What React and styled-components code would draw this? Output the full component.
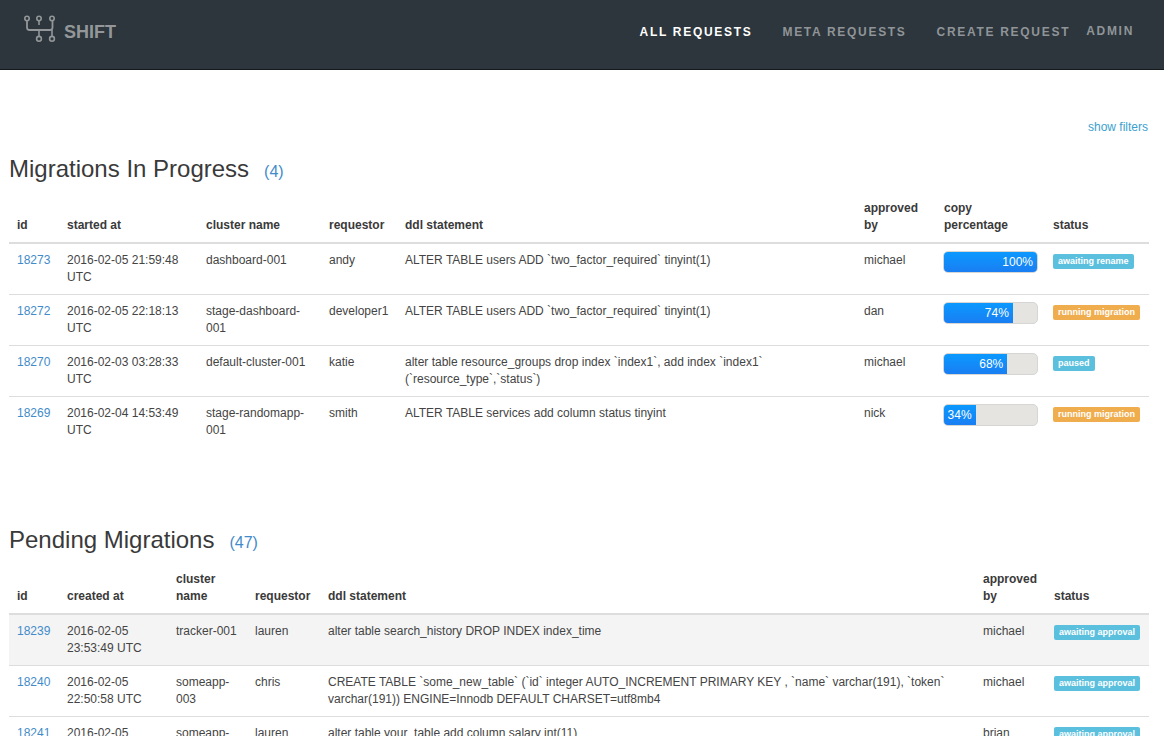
import React from 'react'
import styled, { createGlobalStyle } from 'styled-components'

const GlobalStyle = createGlobalStyle`
  html, body {
    margin: 0;
    height: 736px;
    overflow: hidden;
    background: #fff;
  }
  body {
    font-family: "Liberation Sans", Arial, sans-serif;
    font-size: 12px;
    line-height: 17px;
    color: #444;
  }
`

const Navbar = styled.header`
  display: flex;
  align-items: center;
  box-sizing: border-box;
  height: 70px;
  padding: 0 30px 5px 24px;
  background: #2c363c;
  border-bottom: 1px solid #14191c;
`

const Brand = styled.div`
  display: flex;
  align-items: center;
  gap: 6px;
  margin-right: auto;
  color: #93979a;
  font-size: 18px;
  font-weight: bold;
`

const LogoMark = styled.svg`
  margin-bottom: 4px;
`

const NavLink = styled.a`
  margin-left: ${(p) => p.$gap}px;
  margin-bottom: ${(p) => (p.$raised ? 2 : 0)}px;
  color: ${(p) => (p.$active ? '#fff' : '#909498')};
  font-size: 12px;
  font-weight: bold;
  letter-spacing: 1.7px;
  white-space: nowrap;
`

const Content = styled.main`
  padding: 49px 16px 0 9px;
`

const FilterRow = styled.div`
  display: flex;
  justify-content: flex-end;
  color: #3c9fd0;
`

const Section = styled.section`
  margin-bottom: ${(p) => p.$bottom || 0}px;
`

const Heading = styled.h2`
  display: flex;
  align-items: baseline;
  gap: 15px;
  margin: ${(p) => p.$top}px 0 6px;
  font-size: 24px;
  font-weight: normal;
  line-height: 28px;
  color: #3a3a3a;
`

const Count = styled.span`
  font-size: 16px;
  color: #428bca;
`

const Table = styled.table`
  width: 1140px;
  table-layout: fixed;
  border-collapse: collapse;
  border-spacing: 0;

  ${(p) => p.$open && 'tbody tr:last-child td { border-bottom: none; }'}
`

const HeadCell = styled.th`
  padding: 8px;
  text-align: left;
  vertical-align: bottom;
  font-weight: bold;
  color: #3a3a3a;
  border-bottom: 2px solid #ddd;
`

const Row = styled.tr`
  background: ${(p) => (p.$shaded ? '#f4f4f4' : 'transparent')};
`

const Cell = styled.td`
  padding: 8px;
  vertical-align: top;
  color: #444;
  border-bottom: 1px solid #ddd;
`

const IdLink = styled.a`
  color: #428bca;
`

const Progress = styled.div`
  box-sizing: border-box;
  width: 95px;
  height: 22px;
  margin: -1px 0 0 -1px;
  border: 1px solid #d6d6d4;
  border-radius: 5px;
  background: #e5e4e1;
  overflow: hidden;
`

const ProgressFill = styled.div`
  box-sizing: border-box;
  height: 100%;
  padding-right: 4px;
  text-align: right;
  line-height: 21px;
  color: #fff;
  background: linear-gradient(to bottom, #0a99ff, #1a7ef2);
`

const Label = styled.span`
  display: inline-block;
  margin-top: 2px;
  padding: 0 5px;
  height: 15px;
  line-height: 14px;
  font-size: 9px;
  font-weight: bold;
  white-space: nowrap;
  color: #fff;
  border-radius: 2px;
  background: ${(p) => (p.$kind === 'warning' ? '#f0ad4e' : '#5bc0de')};
`

const ShiftLogo = () => (
  <LogoMark width="34" height="30" viewBox="0 0 34 30" fill="none" stroke="#93979a" strokeWidth="1.6">
    <circle cx="3" cy="3.5" r="2.2" />
    <circle cx="15" cy="3.5" r="2.2" />
    <circle cx="28" cy="3.5" r="2.2" />
    <path d="M3 6v6.5q0 2.5 2.5 2.5H26q2.5 0 2.5-2.5V6" strokeWidth="1.8" />
    <path d="M15 6v4" />
    <path d="M15 15v6M28 15v6" />
    <circle cx="15" cy="23.8" r="2.4" />
    <circle cx="28" cy="23.8" r="2.4" />
  </LogoMark>
)

const progressRows = [
  { id: '18273', started: '2016-02-05 21:59:48 UTC', cluster: 'dashboard-001', requestor: 'andy', ddl: 'ALTER TABLE users ADD `two_factor_required` tinyint(1)', approved: 'michael', pct: 100, status: 'awaiting rename', kind: 'info' },
  { id: '18272', started: '2016-02-05 22:18:13 UTC', cluster: 'stage-dashboard-001', requestor: 'developer1', ddl: 'ALTER TABLE users ADD `two_factor_required` tinyint(1)', approved: 'dan', pct: 74, status: 'running migration', kind: 'warning' },
  { id: '18270', started: '2016-02-03 03:28:33 UTC', cluster: 'default-cluster-001', requestor: 'katie', ddl: 'alter table resource_groups drop index `index1`, add index `index1` (`resource_type`,`status`)', approved: 'michael', pct: 68, status: 'paused', kind: 'info' },
  { id: '18269', started: '2016-02-04 14:53:49 UTC', cluster: 'stage-randomapp-001', requestor: 'smith', ddl: 'ALTER TABLE services add column status tinyint', approved: 'nick', pct: 34, status: 'running migration', kind: 'warning' },
]

const pendingRows = [
  { id: '18239', created: '2016-02-05 23:53:49 UTC', cluster: 'tracker-001', requestor: 'lauren', ddl: 'alter table search_history DROP INDEX index_time', approved: 'michael' },
  { id: '18240', created: '2016-02-05 22:50:58 UTC', cluster: 'someapp-003', requestor: 'chris', ddl: 'CREATE TABLE `some_new_table` (`id` integer AUTO_INCREMENT PRIMARY KEY , `name` varchar(191), `token` varchar(191)) ENGINE=Innodb DEFAULT CHARSET=utf8mb4', approved: 'michael' },
  { id: '18241', created: '2016-02-05', cluster: 'someapp-', requestor: 'lauren', ddl: 'alter table your_table add column salary int(11)', approved: 'brian' },
]

const App = () => {
  return (
    <>
      <GlobalStyle />
      <Navbar>
        <Brand>
          <ShiftLogo />
          SHIFT
        </Brand>
        <NavLink $gap={0} $active>ALL REQUESTS</NavLink>
        <NavLink $gap={30}>META REQUESTS</NavLink>
        <NavLink $gap={30}>CREATE REQUEST</NavLink>
        <NavLink $gap={16} $raised>ADMIN</NavLink>
      </Navbar>
      <Content>
        <FilterRow>show filters</FilterRow>
        <Section $bottom={79}>
          <Heading $top={19}>
            Migrations In Progress <Count>(4)</Count>
          </Heading>
          <Table $open>
            <colgroup>
              <col width="50" />
              <col width="139" />
              <col width="123" />
              <col width="76" />
              <col width="459" />
              <col width="80" />
              <col width="109" />
              <col width="104" />
            </colgroup>
            <thead>
              <tr>
                <HeadCell>id</HeadCell>
                <HeadCell>started at</HeadCell>
                <HeadCell>cluster name</HeadCell>
                <HeadCell>requestor</HeadCell>
                <HeadCell>ddl statement</HeadCell>
                <HeadCell>approved by</HeadCell>
                <HeadCell>copy percentage</HeadCell>
                <HeadCell>status</HeadCell>
              </tr>
            </thead>
            <tbody>
              {progressRows.map((r) => (
                <Row key={r.id}>
                  <Cell><IdLink>{r.id}</IdLink></Cell>
                  <Cell>{r.started}</Cell>
                  <Cell>{r.cluster}</Cell>
                  <Cell>{r.requestor}</Cell>
                  <Cell>{r.ddl}</Cell>
                  <Cell>{r.approved}</Cell>
                  <Cell>
                    <Progress>
                      <ProgressFill style={{ width: `${r.pct}%` }}>{r.pct}%</ProgressFill>
                    </Progress>
                  </Cell>
                  <Cell><Label $kind={r.kind}>{r.status}</Label></Cell>
                </Row>
              ))}
            </tbody>
          </Table>
        </Section>
        <Section>
          <Heading $top={0}>
            Pending Migrations <Count>(47)</Count>
          </Heading>
          <Table>
            <colgroup>
              <col width="50" />
              <col width="109" />
              <col width="79" />
              <col width="73" />
              <col width="655" />
              <col width="71" />
              <col width="103" />
            </colgroup>
            <thead>
              <tr>
                <HeadCell>id</HeadCell>
                <HeadCell>created at</HeadCell>
                <HeadCell>cluster name</HeadCell>
                <HeadCell>requestor</HeadCell>
                <HeadCell>ddl statement</HeadCell>
                <HeadCell>approved by</HeadCell>
                <HeadCell>status</HeadCell>
              </tr>
            </thead>
            <tbody>
              {pendingRows.map((r, i) => (
                <Row key={r.id} $shaded={i === 0}>
                  <Cell><IdLink>{r.id}</IdLink></Cell>
                  <Cell>{r.created}</Cell>
                  <Cell>{r.cluster}</Cell>
                  <Cell>{r.requestor}</Cell>
                  <Cell>{r.ddl}</Cell>
                  <Cell>{r.approved}</Cell>
                  <Cell><Label $kind="info">awaiting approval</Label></Cell>
                </Row>
              ))}
            </tbody>
          </Table>
        </Section>
      </Content>
    </>
  )
}

export default App
